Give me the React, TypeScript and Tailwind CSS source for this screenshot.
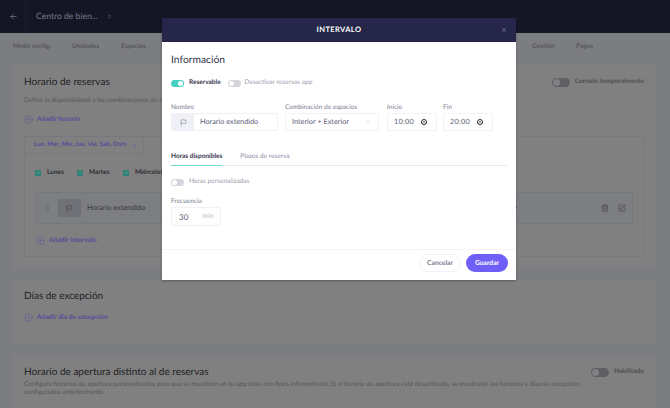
import React from "react"
import { ArrowLeft, ChevronDown, ChevronsUpDown, CirclePlus, Flag, GripVertical, SquarePen, Trash2, X, Check } from "lucide-react"

const Toggle = ({ on }: { on?: boolean }) => (
  <span
    className={`flex items-center rounded-full w-[13px] h-[7px] p-[1px] ${on ? "justify-end bg-[#45d0c0]" : "bg-[#d3d4dc]"}`}
  >
    <span className="rounded-full bg-white w-[5px] h-[5px]" />
  </span>
)

const BgToggle = () => (
  <span className="flex items-center w-[18px] h-[9px] rounded-full bg-[#5f6065] p-[1px]">
    <span className="w-[7px] h-[7px] rounded-full bg-[#808185]" />
  </span>
)

const AddLink = ({ label }: { label: string }) => (
  <div className="flex items-center gap-[4px] text-[6.7px] font-bold text-[#574b9a]">
    <CirclePlus size={9} strokeWidth={1.2} />
    {label}
  </div>
)

const Day = ({ label, width }: { label: string; width: string }) => (
  <div className={`flex items-center gap-[6px] text-[6.5px] font-bold text-[#2c2d33] ${width}`}>
    <span className="flex items-center justify-center w-[6px] h-[6px] bg-[#2f8079] text-[#79a5a0]">
      <Check size={5} strokeWidth={3} />
    </span>
    {label}
  </div>
)

const Label = ({ children }: { children: React.ReactNode }) => (
  <div className="text-[6.5px] leading-[9px] text-[#7a7c92] mb-[1px]">{children}</div>
)

const TimeField = ({ label, value }: { label: string; value: string }) => (
  <div>
    <Label>{label}</Label>
    <div className="flex items-center justify-between w-[50px] h-[18px] border border-[#f1f1f5] rounded-[2px] pl-[6px] pr-[9px] text-[7.2px] tracking-[0.3px] text-[#5b5d78]">
      {value}
      <span className="flex items-center justify-center w-[6px] h-[6px] rounded-full border border-[#23242e]">
        <X size={4} strokeWidth={2.5} className="text-[#23242e]" />
      </span>
    </div>
  </div>
)

const App = () => {
  return (
    <div
      className="relative w-[670px] h-[408px] overflow-hidden bg-[#7c7d81] text-[#2c2d33] [text-rendering:geometricPrecision]"
      style={{ fontFamily: "Lato, sans-serif" }}
    >
      {/* page behind the overlay */}
      <div className="flex items-center h-[33px] bg-[#141626] text-[#77788a]">
        <div className="flex items-center w-[26px] h-[33px] pl-[9px] border-r border-[#1b1d30]">
          <ArrowLeft size={9} />
        </div>
        <div className="ml-[10px] text-[8.6px]">Centro de bien...</div>
        <ChevronsUpDown size={5} className="ml-[9px] text-[#a0a1ad]" />
      </div>

      <div className="flex items-center h-[27px] pl-[13px] text-[6.5px] font-bold text-[#56575c]">
        <span className="w-[59px]">Modo config.</span>
        <span className="w-[49px]">Unidades</span>
        <span className="w-[411px]">Espacios</span>
        <span className="w-[44px]">Gestión</span>
        <span>Pagos</span>
      </div>

      <div className="flex flex-col gap-[12px] ml-[13px] mr-[15px] mt-[5px]">
        <div className="h-[203px] bg-[#808080] pt-[10px] px-[11px]">
          <div className="flex items-center justify-between h-[14px]">
            <div className="text-[10px] text-[#1f2024]">Horario de reservas</div>
            <div className="flex items-center gap-[5px] text-[6.5px] font-bold text-[#4e4f54]">
              <BgToggle />
              Cerrado temporalmente
            </div>
          </div>
          <div className="mt-[7px] text-[6.5px] leading-[9px] text-[#55565b]">Define la disponibilidad a las combinaciones de espacios</div>
          <div className="mt-[10px] h-[9px] flex items-center">
            <AddLink label="Añadir horario" />
          </div>
          <div className="mt-[12px] h-[121px] border border-[#787980]">
            <div className="flex items-center w-[120px] h-[18px] -mt-[1px] -ml-[1px] border border-[#787980] pl-[9px] text-[6.3px] whitespace-nowrap text-[#574b9a] font-bold">
              Lun, Mar, Mie, Jue, Vie, Sab, Dom
              <X size={5} className="ml-[5px]" />
            </div>
            <div className="flex mt-[14px] ml-[10px] h-[9px]">
              <Day label="Lunes" width="w-[42px]" />
              <Day label="Martes" width="w-[46px]" />
              <Day label="Miércoles" width="w-[50px]" />
            </div>
            <div className="flex items-center h-[32px] mt-[15px] ml-[10px] mr-[10px] border border-[#77787d] bg-[#7d7e82]">
              <GripVertical size={8} className="ml-[7px] text-[#65666a]" />
              <span className="flex items-center justify-center w-[23px] h-[18px] ml-[7px] bg-[#707176]">
                <Flag size={7} className="text-[#414249]" />
              </span>
              <span className="ml-[6px] text-[7.3px] text-[#36373c]">Horario extendido</span>
              <span className="ml-auto text-[6.5px] text-[#36373c]">app</span>
              <Trash2 size={8} className="ml-[84px] text-[#45464b]" />
              <SquarePen size={8} className="ml-[9px] mr-[6px] text-[#45464b]" />
            </div>
            <div className="mt-[12px] ml-[11px] h-[9px] flex items-center">
              <AddLink label="Añadir intervalo" />
            </div>
          </div>
        </div>

        <div className="h-[64px] bg-[#808080] pt-[9px] px-[11px]">
          <div className="h-[14px] flex items-center text-[10px] text-[#1f2024]">Días de excepción</div>
          <div className="mt-[9px]">
            <AddLink label="Añadir día de excepción" />
          </div>
        </div>

        <div className="h-[60px] bg-[#808080] pt-[9px] px-[11px]">
          <div className="flex items-center justify-between h-[14px]">
            <div className="text-[10px] text-[#1f2024]">Horario de apertura distinto al de reservas</div>
            <div className="flex items-center gap-[5px] text-[6.5px] font-bold text-[#4e4f54]">
              <BgToggle />
              Habilitado
            </div>
          </div>
          <div className="mt-[2px] max-w-[570px] text-[6.5px] leading-[8px] text-[#55565b]">
            Configura horarios de apertura personalizados para que se muestren en tu app (solo con fines informativos). Si el horario de apertura está desactivado, se mostrarán los horarios y días de excepción configurados anteriormente.
          </div>
        </div>
      </div>

      {/* modal */}
      <div className="absolute left-[162px] top-[18px] w-[354px] h-[262px] bg-white flex flex-col shadow-[0_1px_2px_rgba(0,0,0,0.3)]">
        <div className="relative flex items-center justify-center h-[24px] bg-[#25264a] text-[7.5px] font-bold tracking-[0.4px] text-white">
          INTERVALO
          <X size={6} className="absolute right-[9px] text-[#a6a7b8]" />
        </div>
        <div className="flex-1 px-[9px]">
          <div className="mt-[13px] h-[12px] flex items-center text-[10.3px] text-[#35364d]">Información</div>
          <div className="flex items-center mt-[12px] h-[8px] text-[6.5px]">
            <Toggle on />
            <span className="ml-[5px] font-bold text-[#35364d]">Reservable</span>
            <span className="ml-[7px]"><Toggle /></span>
            <span className="ml-[4px] text-[#9a9cae]">Desactivar reservas app</span>
          </div>

          <div className="flex mt-[16px]">
            <div className="w-[107px]">
              <Label>Nombre</Label>
              <div className="flex items-center h-[18px] border border-[#f1f1f5] rounded-[2px]">
                <span className="flex items-center justify-center w-[22px] h-[16px] bg-[#f0f1f6]">
                  <Flag size={7} className="text-[#7a7c92]" />
                </span>
                <span className="ml-[6px] text-[7.3px] text-[#5b5d78]">Horario extendido</span>
              </div>
            </div>
            <div className="ml-[7px] w-[94px]">
              <Label>Combinación de espacios</Label>
              <div className="flex items-center justify-between h-[18px] border border-[#f1f1f5] rounded-[2px] pl-[6px] pr-[7px] text-[7.3px] text-[#5b5d78]">
                Interior + Exterior
                <ChevronDown size={6} className="text-[#b8b9c6]" />
              </div>
            </div>
            <div className="ml-[8px]">
              <TimeField label="Inicio" value="10:00" />
            </div>
            <div className="ml-[6px]">
              <TimeField label="Fin" value="20:00" />
            </div>
          </div>

          <div className="flex mt-[21px] border-b border-[#e8e8ef] text-[6.5px] leading-[9px]">
            <span className="pb-[4px] -mb-[1px] border-b border-[#6fdccf] font-bold text-[#35364d]">Horas disponibles</span>
            <span className="ml-[18px] text-[#8a8c9f]">Plazos de reserva</span>
          </div>

          <div className="flex items-center mt-[12px] h-[8px] text-[6.5px] text-[#9a9cae]">
            <Toggle />
            <span className="ml-[5px]">Horas personalizadas</span>
          </div>

          <div className="mt-[11px]">
            <Label>Frecuencia</Label>
            <div className="flex items-center w-[50px] h-[19px] border border-[#f1f1f5] rounded-[2px] pl-[7px] text-[8px] text-[#5b5d78]">
              30
              <span className="ml-[14px] text-[7px] text-[#b9bac7]">min</span>
            </div>
          </div>
        </div>
        <div className="flex items-center justify-end gap-[5px] h-[31px] border-t border-[#f4f4f7] pr-[8px] pb-[4px]">
          <span className="flex items-center justify-center w-[42px] h-[18px] rounded-full border border-[#f1f1f5] text-[6.7px] font-bold text-[#7a7c92]">Cancelar</span>
          <span className="flex items-center justify-center w-[42px] h-[18px] rounded-full bg-[#6f5ff6] text-[6.7px] font-bold text-white">Guardar</span>
        </div>
      </div>
    </div>
  )
}

export default App
